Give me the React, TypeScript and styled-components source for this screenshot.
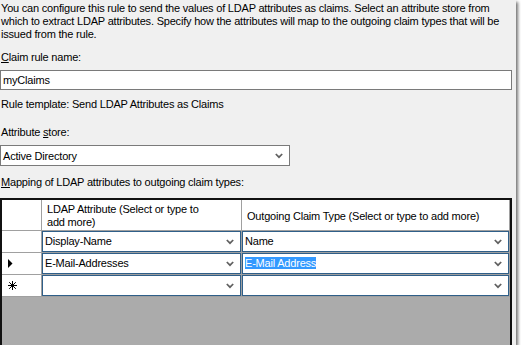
import React from "react";
import styled, { createGlobalStyle } from "styled-components";

const Global = createGlobalStyle`
  html, body { margin: 0; padding: 0; background: #ffffff; }
  body { font-family: "Liberation Sans", Arial, sans-serif; font-size: 11px; letter-spacing: -0.2px; color: #000; }
`;

const Window = styled.div`
  width: 516px;
  height: 345px;
  background: #f0f0f0;
  box-shadow: 2px 2px 3px rgba(0, 0, 0, 0.55);
  display: flex;
  flex-direction: column;
  padding-right: 4px;
  box-sizing: border-box;
  overflow: hidden;
`;

const Description = styled.p`
  margin: 0;
  padding: 2px 0 0 1px;
  line-height: 13px;
  white-space: nowrap;
`;

const Label = styled.div<{ $gap: number }>`
  margin-top: ${(p) => p.$gap}px;
  padding-left: 1px;
  line-height: 13px;
  height: 13px;
  white-space: nowrap;
`;

const Key = styled.span`
  text-decoration: underline;
  text-underline-offset: 1px;
`;

const TextInput = styled.div`
  margin-top: 6px;
  height: 20px;
  box-sizing: border-box;
  border: 1px solid #7a7a7a;
  background: #fff;
  display: flex;
  align-items: center;
  padding-left: 2px;
`;

const Combo = styled.div`
  margin-top: 6px;
  width: 290px;
  height: 21px;
  box-sizing: border-box;
  border: 1px solid #7a7a7a;
  background: #fff;
  display: flex;
  align-items: center;
  justify-content: space-between;
  padding: 0 6px 0 2px;
`;

const Grid = styled.div`
  margin-top: 9px;
  flex: 1;
  width: 512px;
  box-sizing: border-box;
  border: 2px solid #111;
  border-bottom: none;
  background: #ababab;
`;

const Table = styled.div`
  display: grid;
  grid-template-columns: 40px 200px 268px;
  grid-template-rows: 31px repeat(3, 22px);
`;

const HeaderCell = styled.div`
  background: #fff;
  border-right: 1px solid #a0a0a0;
  border-bottom: 1px solid #a0a0a0;
  padding: 2px 4px 0 5px;
  line-height: 13px;
  display: flex;
  align-items: center;
  white-space: nowrap;
`;

const CornerCell = styled.div`
  background: #fff;
  border-right: 1px solid #a0a0a0;
  border-bottom: 1px solid #a0a0a0;
`;

const RowHead = styled.div`
  background: #fff;
  border-right: 1px solid #a0a0a0;
  border-bottom: 1px solid #a0a0a0;
  display: flex;
  align-items: center;
  padding-left: 6px;
`;

const Cell = styled.div`
  background: #fff;
  border-right: 1px solid #a0a0a0;
  border-bottom: 1px solid #a0a0a0;
  display: flex;
`;

const CellCombo = styled.div`
  flex: 1;
  border: 1px solid #2f5f89;
  background: #fff;
  display: flex;
  align-items: center;
  justify-content: space-between;
  padding: 0 6px 0 2px;
  line-height: 13px;
`;

const Selected = styled.span`
  background: #3399ff;
  color: #fff;
`;

const Chevron = () => (
  <svg width="8" height="6" viewBox="0 0 8 6">
    <path d="M0.8 1 L4 4.2 L7.2 1" fill="none" stroke="#606060" strokeWidth="1.7" />
  </svg>
);

const Arrow = () => (
  <svg width="5" height="9" viewBox="0 0 5 9">
    <polygon points="0,0 4.5,4.5 0,9" fill="#000" />
  </svg>
);

const Star = () => (
  <svg width="9" height="9" viewBox="0 0 9 9">
    <path d="M4.5 0 V9 M0 4.5 H9 M1.2 1.2 L7.8 7.8 M7.8 1.2 L1.2 7.8" stroke="#000" strokeWidth="1" />
  </svg>
);

type Row = { head: React.ReactNode; ldap: string; claim: React.ReactNode };

const rows: Row[] = [
  { head: null, ldap: "Display-Name", claim: "Name" },
  { head: <Arrow />, ldap: "E-Mail-Addresses", claim: <Selected>E-Mail Address</Selected> },
  { head: <Star />, ldap: "", claim: "" },
];

export default function App() {
  return (
    <>
      <Global />
      <Window>
        <Description>
          You can configure this rule to send the values of LDAP attributes as claims. Select an attribute store from
          <br />
          which to extract LDAP attributes. Specify how the attributes will map to the outgoing claim types that will be
          <br />
          issued from the rule.
        </Description>
        <Label $gap={10}>
          <Key>C</Key>laim rule name:
        </Label>
        <TextInput>myClaims</TextInput>
        <Label $gap={8}>Rule template: Send LDAP Attributes as Claims</Label>
        <Label $gap={15}>
          Attribute <Key>s</Key>tore:
        </Label>
        <Combo>
          <span>Active Directory</span>
          <Chevron />
        </Combo>
        <Label $gap={10}>
          <Key>M</Key>apping of LDAP attributes to outgoing claim types:
        </Label>
        <Grid>
          <Table>
            <CornerCell />
            <HeaderCell>
              LDAP Attribute (Select or type to
              <br />
              add more)
            </HeaderCell>
            <HeaderCell>Outgoing Claim Type (Select or type to add more)</HeaderCell>
            {rows.map((r, i) => (
              <React.Fragment key={i}>
                <RowHead>{r.head}</RowHead>
                <Cell>
                  <CellCombo>
                    <span>{r.ldap}</span>
                    <Chevron />
                  </CellCombo>
                </Cell>
                <Cell>
                  <CellCombo>
                    <span>{r.claim}</span>
                    <Chevron />
                  </CellCombo>
                </Cell>
              </React.Fragment>
            ))}
          </Table>
        </Grid>
      </Window>
    </>
  );
}
